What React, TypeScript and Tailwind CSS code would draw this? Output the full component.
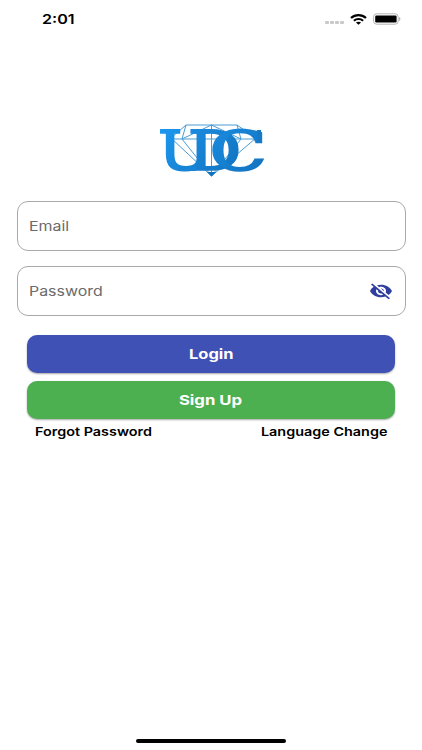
import { MdVisibilityOff } from 'react-icons/md';

function StatusBar() {
  return (
    <header className="flex h-[38px] items-center justify-between pl-[42px] pr-[21px] text-black">
      <span className="origin-left scale-x-[1.24] text-[13px] font-semibold leading-none">2:01</span>
      <div className="flex items-center">
        <div className="mr-[6px] mt-[7px] flex gap-[1.5px]">
          {[0, 1, 2, 3].map((dot) => (
            <span key={dot} className="h-[3px] w-[3.6px] rounded-[1px] bg-[#c9c9c9]" />
          ))}
        </div>
        <svg className="mr-[6px]" width="17" height="11" viewBox="0 0 17 11" fill="none" stroke="black" strokeWidth="2.2">
          <path d="M1 4C5.2 .2 11.8 .2 16 4" />
          <path d="M3.9 6.7C6.5 4.4 10.5 4.4 13.1 6.7" />
          <path d="M8.5 10.7L5.9 8.6C7.3 7.4 9.7 7.4 11.1 8.6Z" fill="black" stroke="none" />
        </svg>
        <svg width="28" height="12" viewBox="0 0 28 12">
          <rect x=".6" y=".8" width="24.6" height="10.4" rx="3" fill="none" stroke="#b5b5b5" strokeWidth="1" />
          <rect x="2.2" y="2.6" width="21.4" height="6.8" rx="1.2" />
          <path d="M26.2 4C27.8 4.6 27.8 7.4 26.2 8Z" fill="#a5a5a5" />
        </svg>
      </div>
    </header>
  );
}

function Logo() {
  return (
    <svg className="ml-[150px] block" width="125" height="70" viewBox="0 0 125 70" aria-label="UDC">
      <defs>
        <linearGradient id="light" x1="0" y1="0" x2="1" y2="1">
          <stop offset="0.1" stopColor="#1c97ee" />
          <stop offset="0.9" stopColor="#147ccb" />
        </linearGradient>
        <linearGradient id="deep" x1="0" y1="0" x2="1" y2="1">
          <stop offset="0.1" stopColor="#1a8ade" />
          <stop offset="0.9" stopColor="#1273bf" />
        </linearGradient>
      </defs>
      <g fill="none" stroke="#4a9cd6" strokeWidth="1">
        <path d="M36 10H87L106 23L61.5 61L21 23Z" />
        <path d="M21 24H106M36 10L32 24L61.5 61L91 24L87 10" />
        <path d="M32 24L61.5 10L91 24M61.5 10V61" />
      </g>
      <path d="M57 57H66L61.5 61.5Z" fill="#1273bd" />
      <g fontFamily="'DejaVu Serif', serif" fontSize="53.5" strokeWidth="2" strokeLinejoin="miter">
        <text transform="translate(8.2 55) scale(1.17 1)" fill="url(#light)" stroke="url(#light)">U</text>
        <text transform="translate(38 55) scale(1.24 1)" fill="url(#deep)" stroke="url(#deep)">D</text>
        <text transform="translate(59.5 55) scale(1.4 1)" fill="url(#deep)" stroke="url(#deep)">C</text>
      </g>
      <rect x="28" y="51.5" width="18" height="4.5" fill="#1784d6" />
      <rect x="107" y="15" width="4" height="13" fill="#147ac8" />
    </svg>
  );
}

function Field({ label, secret = false }: { label: string; secret?: boolean }) {
  return (
    <div className="flex h-[50px] items-center justify-between rounded-[11px] border border-[#a9a9a9] pl-[11px] pr-[12px]">
      <span className="origin-left scale-x-[1.18] pt-px text-[13.5px] leading-none text-[#6b6b6b]">{label}</span>
      {secret && (
        <MdVisibilityOff className="h-[20px] w-[24px] text-[#303f9f]" preserveAspectRatio="none" />
      )}
    </div>
  );
}

export default function App() {
  return (
    <div className="flex h-[750px] w-[422px] flex-col overflow-hidden bg-white font-['Inter',sans-serif]">
      <StatusBar />
      <main className="flex flex-1 flex-col pt-[77px]">
        <Logo />
        <div className="mt-[16px] flex flex-col gap-[15px] pl-[17px] pr-[16px]">
          <Field label="Email" />
          <Field label="Password" secret />
        </div>
        <div className="mt-[19px] flex flex-col gap-[8.5px] px-[27px] text-white">
          <button className="flex h-[37.5px] items-center justify-center rounded-[10px] bg-[#3f51b5] pt-[2px] shadow-[0_1px_2px_rgba(0,0,0,0.35)]">
            <span className="scale-x-[1.22] text-[13.5px] font-bold leading-none">Login</span>
          </button>
          <button className="flex h-[37.5px] items-center justify-center rounded-[10px] bg-[#4caf50] pt-[2px] shadow-[0_1px_2px_rgba(0,0,0,0.35)]">
            <span className="scale-x-[1.24] text-[13.5px] font-bold leading-none">Sign Up</span>
          </button>
        </div>
        <div className="mt-[7.4px] flex justify-between px-[35px] text-[12px] font-semibold leading-none text-black">
          <span className="origin-left scale-x-[1.2]">Forgot Password</span>
          <span className="origin-right scale-x-[1.2]">Language Change</span>
        </div>
      </main>
      <div className="mx-auto mb-[7px] h-[4px] w-[150px] rounded-full bg-black" />
    </div>
  );
}
